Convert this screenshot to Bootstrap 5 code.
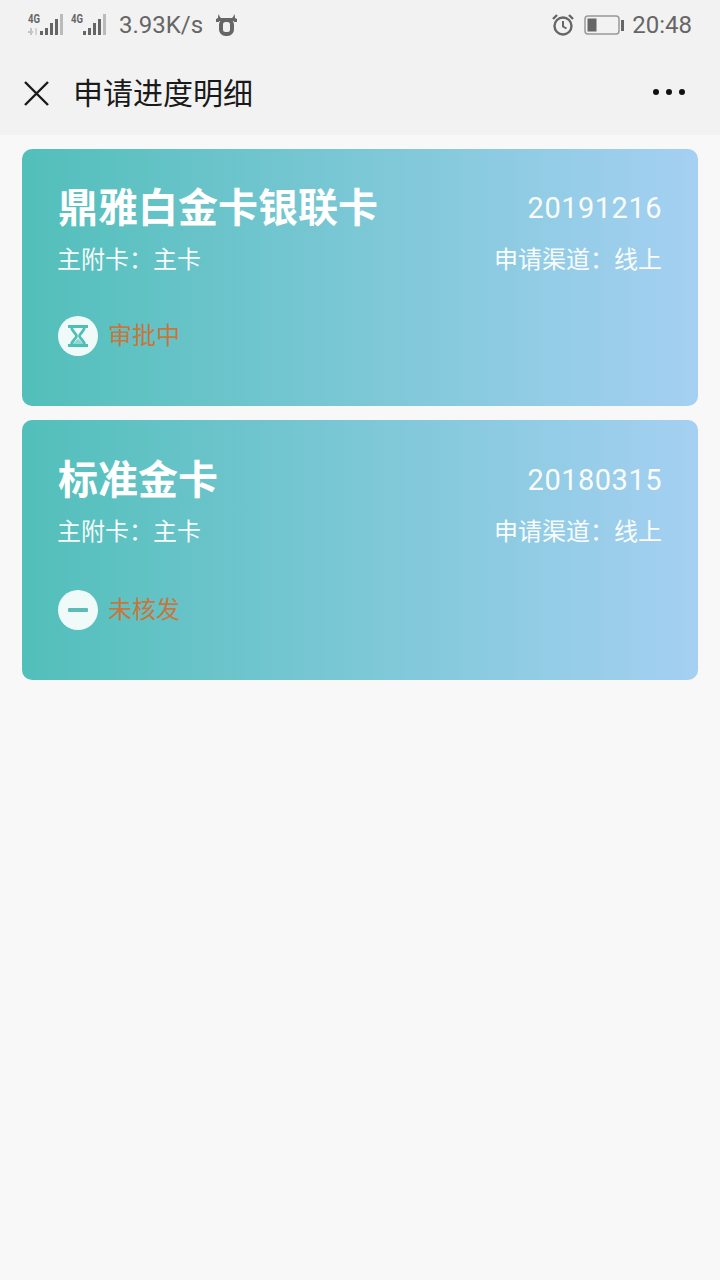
<!DOCTYPE html>
<html lang="zh-CN">
<head>
  <meta charset="UTF-8" />
  <meta name="viewport" content="width=device-width, initial-scale=1.0"/>
  <title>申请进度明细</title>
  <link href="https://cdn.jsdelivr.net/npm/bootstrap@5.3.0/dist/css/bootstrap.min.css" rel="stylesheet"/>
  <style>
    body {
      background: #f8f8f8;
      font-family: Roboto, "Noto Sans CJK SC", sans-serif;
      width: 720px;
      height: 1280px;
      overflow: hidden;
    }
    .top-area { background: #f2f2f2; height: 135px; }
    .status-bar { height: 50px; padding: 0 28px; color: #666; font-size: 24px; line-height: 1; }
    .title-bar { height: 85px; padding: 2px 22px 0 22px; }
    .title-text { font-size: 30px; color: #1a1a1a; margin-left: 22px; line-height: 1; }
    .more-icon { margin: 0 13px 4px auto; }
    .speed-text { margin-left: 13px; }
    .cow-icon { margin-left: 13px; }
    .clock-text { margin-left: 8px; }
    .card-list { padding: 14px 22px 0; gap: 14px; }
    .apply-card {
      height: 257px;
      border-radius: 10px;
      padding: 0 36px;
      color: #fff;
      background: linear-gradient(90deg, #52bfba, #a5d0f2);
    }
    .apply-card.second { height: 260px; }
    .head-row { padding-top: 37px; height: 83px; }
    .second .head-row { padding-top: 38px; height: 84px; }
    .card-name { font-size: 40px; font-weight: 700; line-height: 46px; margin: 0; }
    .card-date { font-size: 29px; line-height: 46px; letter-spacing: .5px; opacity: .95; margin-top: -1px; }
    .info-row { font-size: 24px; line-height: 30px; margin: 13px 0 0 -1px; opacity: .95; }
    .state-row { margin-top: 41px; }
    .second .state-row { margin-top: 43px; }
    .state-dot { width: 40px; height: 40px; border-radius: 50%; background: #f0faf9; }
    .state-text { font-size: 24px; color: #c9763c; margin-left: 10px; line-height: 1; }
  </style>
</head>
<body>

<div class="top-area">
  <div class="status-bar d-flex align-items-center">
    <svg width="35" height="30" viewBox="0 -3 35 30">
      <text x="0" y="10" font-family="Roboto" font-size="13" font-weight="700" fill="#666" textLength="12" lengthAdjust="spacingAndGlyphs">4G</text>
      <path d="M3 15v7M0 19h5" stroke="#c4c4c4" stroke-width="2"/>
      <path d="M8 15v7" stroke="#d4d4d4" stroke-width="2"/>
      <path d="M12 18h3v4h-3zM17 15h3v7h-3zM22 10h3v12h-3zM27 6h3v16h-3z" fill="#666"/>
      <path d="M32 1h3v21h-3z" fill="#bbb"/>
    </svg>
    <svg class="ms-2" width="35" height="30" viewBox="0 -3 35 30">
      <text x="0" y="10" font-family="Roboto" font-size="13" font-weight="700" fill="#666" textLength="12" lengthAdjust="spacingAndGlyphs">4G</text>
      <path d="M12 18h3v4h-3zM17 15h3v7h-3zM22 10h3v12h-3zM27 6h3v16h-3z" fill="#666"/>
      <path d="M32 1h3v21h-3z" fill="#bbb"/>
    </svg>
    <span class="speed-text">3.93K/s</span>
    <svg class="cow-icon" width="21" height="22" viewBox="0 0 21 22">
      <path d="M3 0c0 2 1 3 2 4h11c1-1 2-2 2-4 1 1 1 3 1 4l2 1v3h-3v-1H3v1H0V5l2-1c0-1 0-3 1-4z" fill="#666"/>
      <rect x="5" y="6" width="11" height="14" rx="4.500" fill="none" stroke="#666" stroke-width="4"/>
    </svg>
    <span class="ms-auto d-flex align-items-center">
      <svg width="24" height="24" viewBox="0 0 24 24" fill="none" stroke="#666">
        <circle cx="11" cy="13" r="8.500" stroke-width="2.400"/>
        <path d="M11 8v5.500l3.500 2" stroke-width="2"/>
        <path d="M1 6l4-4M21 6l-4-4" stroke-width="2.400"/>
      </svg>
      <svg class="ms-2" width="40" height="22" viewBox="0 0 40 22">
        <rect x="1" y="2" width="34" height="18" rx="3" fill="none" stroke="#999" stroke-width="1.500"/>
        <rect x="3.500" y="4.500" width="9" height="13" fill="#666"/>
        <rect x="37" y="6" width="3" height="11" fill="#666"/>
      </svg>
      <span class="clock-text">20:48</span>
    </span>
  </div>
  <div class="title-bar d-flex align-items-center">
    <svg width="29" height="29" viewBox="0 0 29 29" stroke="#1a1a1a" stroke-width="2.400">
      <path d="M3 3l23 23M26 3L3 26"/>
    </svg>
    <span class="title-text">申请进度明细</span>
    <svg class="more-icon" width="32" height="8" viewBox="0 0 32 8" fill="#111">
      <circle cx="3" cy="4" r="3"/><circle cx="16" cy="4" r="3"/><circle cx="29" cy="4" r="3"/>
    </svg>
  </div>
</div>

<div class="card-list d-flex flex-column">
  <div class="apply-card">
    <div class="head-row d-flex justify-content-between">
      <h2 class="card-name">鼎雅白金卡银联卡</h2>
      <span class="card-date">20191216</span>
    </div>
    <div class="info-row d-flex justify-content-between">
      <span>主附卡：主卡</span><span>申请渠道：线上</span>
    </div>
    <div class="state-row d-flex align-items-center">
      <div class="state-dot d-flex align-items-center justify-content-center">
        <svg width="20" height="22" viewBox="0 0 20 22" fill="none" stroke="#4fbfb5" stroke-width="2.800">
          <path d="M4 19.500l6-6 6 6z" fill="#8fd8d2" stroke="none"/>
          <path d="M0 1.500h20M0 20.500h20"/>
          <path d="M3.500 2c0 5 5 6 5 9s-5 4-5 9M16.500 2c0 5-5 6-5 9s5 4 5 9"/>
        </svg>
      </div>
      <span class="state-text">审批中</span>
    </div>
  </div>

  <div class="apply-card second">
    <div class="head-row d-flex justify-content-between">
      <h2 class="card-name">标准金卡</h2>
      <span class="card-date">20180315</span>
    </div>
    <div class="info-row d-flex justify-content-between">
      <span>主附卡：主卡</span><span>申请渠道：线上</span>
    </div>
    <div class="state-row d-flex align-items-center">
      <div class="state-dot d-flex align-items-center justify-content-center">
        <svg width="22" height="4" viewBox="0 0 22 4"><rect width="20" height="4" x="1" rx="1" fill="#5cbcb8"/></svg>
      </div>
      <span class="state-text">未核发</span>
    </div>
  </div>
</div>

<script src="https://cdn.jsdelivr.net/npm/bootstrap@5.3.0/dist/js/bootstrap.bundle.min.js"></script>
</body>
</html>
